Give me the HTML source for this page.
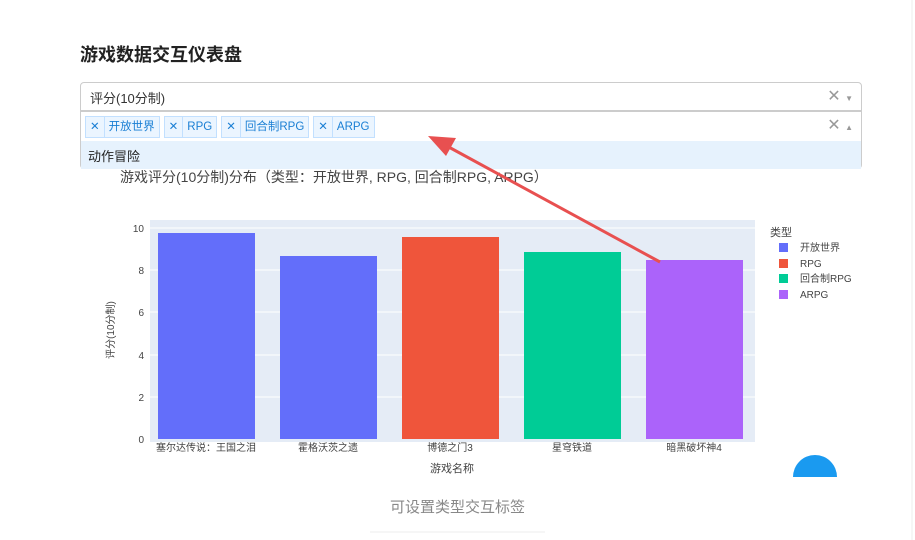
<!DOCTYPE html><html><head><meta charset="utf-8"><style>
body{margin:0;width:915px;height:540px;background:#fff;font-family:"Liberation Sans","Noto Sans CJK SC",sans-serif;position:relative;overflow:hidden}
.a{position:absolute}
.box{position:absolute;left:80px;width:782px;border:1px solid #ccc;background:#fff;box-sizing:border-box}
.tag{display:inline-block;border:1px solid #c2e0ff;background:#ebf5ff;color:#1a7fd4;font-size:11.5px;height:20px;line-height:20px;margin-right:4px;vertical-align:top}
.tag b{font-weight:normal;display:inline-block;padding:0 4px;border-right:1px solid #c2e0ff}
.tag span{padding:0 4px}
</style></head><body>
<div class="a" style="left:80px;top:41px;font-size:18px;font-weight:bold;color:#222">游戏数据交互仪表盘</div>
<div class="box" style="top:82px;height:29px;border-radius:4px 4px 0 0"><span class="a" style="left:9px;top:5px;font-size:13px;color:#333">评分(10分制)</span><span class="a" style="right:8px;top:3px;font-size:16px;color:#999">✕ <span style="font-size:8px">▼</span></span></div>
<div class="box" style="top:111px;height:58px;border-radius:0 0 4px 4px"><div class="a" style="left:4px;top:4px"><span class="tag"><b>✕</b><span>开放世界</span></span><span class="tag"><b>✕</b><span>RPG</span></span><span class="tag"><b>✕</b><span>回合制RPG</span></span><span class="tag"><b>✕</b><span>ARPG</span></span></div><span class="a" style="right:8px;top:3px;font-size:16px;color:#999">✕ <span style="font-size:8px">▲</span></span>
<div class="a" style="left:0;top:29px;width:780px;height:28px;background:#e6f2fd"><span class="a" style="left:7px;top:5px;font-size:13px;color:#222">动作冒险</span></div></div>
<div class="a" style="left:120px;top:167px;font-size:14px;color:#444">游戏评分(10分制)分布（类型：开放世界, RPG, 回合制RPG, ARPG）</div>
<svg class="a" style="left:0;top:0" width="915" height="540">
<rect x="150" y="220" width="605" height="222" fill="#e5ecf6"/>
<g stroke="#fff" stroke-width="1"><line x1="150" x2="755" y1="397" y2="397"/><line x1="150" x2="755" y1="355" y2="355"/><line x1="150" x2="755" y1="312" y2="312"/><line x1="150" x2="755" y1="270" y2="270"/><line x1="150" x2="755" y1="228" y2="228"/></g>
<rect x="158" y="233" width="97" height="206" fill="#636efa"/><rect x="280" y="256" width="97" height="183" fill="#636efa"/><rect x="402" y="237" width="97" height="202" fill="#ef553b"/><rect x="524" y="252" width="97" height="187" fill="#00cc96"/><rect x="646" y="260" width="97" height="179" fill="#ab63fa"/>
<g font-size="10" fill="#444" text-anchor="end"><text x="144" y="443">0</text><text x="144" y="401">2</text><text x="144" y="359">4</text><text x="144" y="316">6</text><text x="144" y="274">8</text><text x="144" y="232">10</text></g>
<g font-size="10" fill="#444" text-anchor="middle"><text x="206" y="451">塞尔达传说：王国之泪</text><text x="328" y="451">霍格沃茨之遗</text><text x="450" y="451">博德之门3</text><text x="572" y="451">星穹铁道</text><text x="694" y="451">暗黑破坏神4</text><text x="452" y="472" font-size="11">游戏名称</text></g>
<text x="114" y="330" font-size="10" fill="#444" text-anchor="middle" transform="rotate(-90 114 330)">评分(10分制)</text>
<text x="770" y="236" font-size="11" fill="#444">类型</text>
<g font-size="10" fill="#444"><rect x="779" y="243" width="9" height="9" fill="#636efa"/><text x="800" y="251">开放世界</text><rect x="779" y="259" width="9" height="9" fill="#ef553b"/><text x="800" y="267">RPG</text><rect x="779" y="274" width="9" height="9" fill="#00cc96"/><text x="800" y="282">回合制RPG</text><rect x="779" y="290" width="9" height="9" fill="#ab63fa"/><text x="800" y="298">ARPG</text></g>
<line x1="660" y1="262" x2="445" y2="145" stroke="#e85050" stroke-width="3"/><polygon points="428,136 456,138 446,156" fill="#e85050"/>
<path d="M793 477 A22 22 0 0 1 837 477 Z" fill="#1a9af0"/>
<line x1="370" y1="532" x2="545" y2="532" stroke="#eee"/>
<line x1="912" y1="0" x2="912" y2="540" stroke="#eee"/>
</svg>
<div class="a" style="left:0;width:915px;top:496px;text-align:center;font-size:15px;color:#888">可设置类型交互标签</div>
</body></html>
